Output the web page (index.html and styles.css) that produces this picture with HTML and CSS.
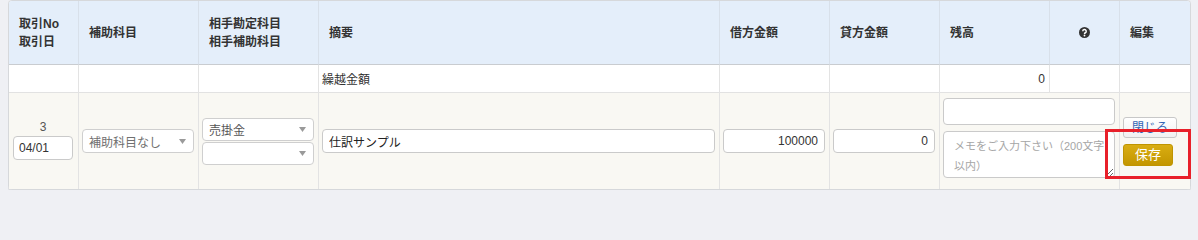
FILE: index.html
```html
<!DOCTYPE html>
<html lang="ja">
<head>
<meta charset="utf-8">
<title>仕訳帳</title>
<link rel="stylesheet" href="styles.css">
</head>
<body>
<div class="ledger">
  <div class="row head">
    <div class="cell">取引No<br>取引日</div>
    <div class="cell">補助科目</div>
    <div class="cell">相手勘定科目<br>相手補助科目</div>
    <div class="cell">摘要</div>
    <div class="cell">借方金額</div>
    <div class="cell">貸方金額</div>
    <div class="cell">残高</div>
    <div class="cell center">
      <svg class="qicon" width="11" height="11" viewBox="0 0 12 12" aria-hidden="true">
        <circle cx="6" cy="6" r="6" fill="#333"/>
        <path d="M4.1 4.7a1.9 1.9 0 1 1 2.8 1.6c-.6.3-.9.6-.9 1.2v.4" fill="none" stroke="#fff" stroke-width="1.6"/>
        <circle cx="6" cy="9.4" r="1" fill="#fff"/>
      </svg>
    </div>
    <div class="cell last">編集</div>
  </div>
  <div class="row carry">
    <div class="cell"></div>
    <div class="cell"></div>
    <div class="cell"></div>
    <div class="cell">繰越金額</div>
    <div class="cell"></div>
    <div class="cell"></div>
    <div class="cell num">0</div>
    <div class="cell"></div>
    <div class="cell last"></div>
  </div>
  <div class="row edit">
    <div class="cell no-cell">
      <div class="no">3</div>
      <input class="field date" type="text" value="04/01">
    </div>
    <div class="cell">
      <div class="select muted"><span>補助科目なし</span><svg width="7" height="5" viewBox="0 0 7 5"><path d="M0 0H7L3.5 5Z" fill="#9a9a9a"/></svg></div>
    </div>
    <div class="cell">
      <div class="select small"><span>売掛金</span><svg width="7" height="5" viewBox="0 0 7 5"><path d="M0 0H7L3.5 5Z" fill="#9a9a9a"/></svg></div>
      <div class="select small second"><span></span><svg width="7" height="5" viewBox="0 0 7 5"><path d="M0 0H7L3.5 5Z" fill="#9a9a9a"/></svg></div>
    </div>
    <div class="cell">
      <input class="field desc" type="text" value="仕訳サンプル">
    </div>
    <div class="cell">
      <input class="field right" type="text" value="100000">
    </div>
    <div class="cell">
      <input class="field right" type="text" value="0">
    </div>
    <div class="cell memo-cell">
      <input class="field memo-input" type="text" value="">
      <textarea class="memo" placeholder="メモをご入力下さい（200文字以内）"></textarea>
    </div>
    <div class="cell last btn-cell">
      <button class="btn-close" type="button">閉じる</button>
      <button class="btn-save" type="button">保存</button>
    </div>
  </div>
  <div class="highlight"></div>
</div>
</body>
</html>
```
FILE: styles.css
```css
* {
  box-sizing: border-box;
}

html, body {
  background: #eff0f4;
}

body {
  margin: 0 7px 0 8px;
  font-family: "Liberation Sans", "Noto Sans CJK JP", sans-serif;
  font-size: 12px;
  color: #333;
}

.ledger {
  position: relative;
  border: 1px solid #d6d8db;
  border-radius: 4px;
  background: #fff;
  box-shadow: 0 1px 2px rgba(0, 0, 0, 0.12);
}

.row {
  display: grid;
  grid-template-columns: 70px 120px 120px 1fr 110px 110px 110px 70px 70px;
}

.cell {
  border-right: 1px solid #e3e3e3;
  min-width: 0;
}

.cell.last {
  border-right: none;
}

/* header */
.head {
  border-radius: 4px 4px 0 0;
}

.head .cell {
  height: 64px;
  background: #e4eefa;
  border-bottom: 1px solid #c9ccd0;
  border-right-color: #d8e0ea;
  padding: 0 10px;
  display: flex;
  align-items: center;
  font-weight: bold;
  line-height: 18px;
  color: #333;
}

.head .cell:first-child {
  border-top-left-radius: 3px;
}

.head .cell.last {
  border-top-right-radius: 3px;
}

.head .cell.center {
  justify-content: center;
  padding: 0;
}

.qicon {
  display: block;
}

/* carry-over row */
.carry .cell {
  height: 28px;
  border-bottom: 1px solid #e2e2e2;
  padding: 0 4px 0 3px;
  display: flex;
  align-items: center;
  background: #fff;
}

.carry .cell.num {
  justify-content: flex-end;
  padding-right: 4px;
}

/* edit row */
.edit .cell {
  height: 96px;
  background: #f9f8f3;
  padding: 0 4px 0 3px;
  display: flex;
  flex-direction: column;
  justify-content: center;
}

.edit .no-cell {
  padding: 0 5px 0 4px;
  align-items: center;
}

.no {
  line-height: 16px;
  color: #555;
  margin-top: -3px;
}

.field {
  display: block;
  width: 100%;
  height: 24px;
  border: 1px solid #cacaca;
  border-radius: 4px;
  background: #fff;
  font-family: "Liberation Sans", "Noto Sans CJK JP", sans-serif;
  font-size: 12px;
  color: #333;
  padding: 0 6px;
  margin: 0;
  outline: none;
}

.field.date {
  width: 60px;
  padding: 0 5px;
  margin-top: 1px;
}

.field.desc {
  color: #222;
}

.field.right {
  text-align: right;
}

.select {
  display: flex;
  align-items: center;
  justify-content: space-between;
  width: 100%;
  height: 24px;
  border: 1px solid #cfcfcf;
  border-radius: 4px;
  background: #fff;
  padding: 0 7px 0 6px;
  color: #555;
}

.select.muted {
  color: #707070;
}

.select.small {
  height: 23px;
}

.select.second {
  margin-top: 1px;
}

.select svg {
  flex: none;
}

.edit .memo-cell {
  grid-column: span 2;
  justify-content: flex-start;
  padding: 5px 4px 0 3px;
}

.field.memo-input {
  height: 27px;
}

.memo {
  display: block;
  width: 100%;
  height: 47px;
  margin: 6px 0 0;
  border: 1px solid #cacaca;
  border-radius: 4px;
  background: #fff;
  padding: 4px 6px 0 10px;
  font-family: "Liberation Sans", "Noto Sans CJK JP", sans-serif;
  font-size: 11px;
  line-height: 20px;
  color: #333;
  overflow: hidden;
  outline: none;
}

.memo::placeholder {
  color: #a6a6a6;
}

.edit .btn-cell {
  align-items: flex-start;
}

.btn-close {
  width: 54px;
  height: 21px;
  margin: 0;
  padding: 2px 0 0;
  border: 1px solid #c8c8c8;
  border-radius: 3px;
  background: linear-gradient(#ffffff, #f1f1f1);
  font-family: "Liberation Sans", "Noto Sans CJK JP", sans-serif;
  font-size: 12px;
  line-height: 16px;
  color: #3466b6;
  overflow: hidden;
}

.btn-save {
  width: 50px;
  height: 22px;
  margin: 6px 0 0;
  padding: 0;
  border: 1px solid #bf9400;
  border-radius: 3px;
  background: linear-gradient(#d9ad12, #c39600);
  font-family: "Liberation Sans", "Noto Sans CJK JP", sans-serif;
  font-size: 13px;
  line-height: 18px;
  color: #fff;
}

/* annotation overlay */
.highlight {
  position: absolute;
  left: 1096px;
  top: 128px;
  width: 86px;
  height: 50px;
  border: 3px solid #e8202a;
  pointer-events: none;
}
```
